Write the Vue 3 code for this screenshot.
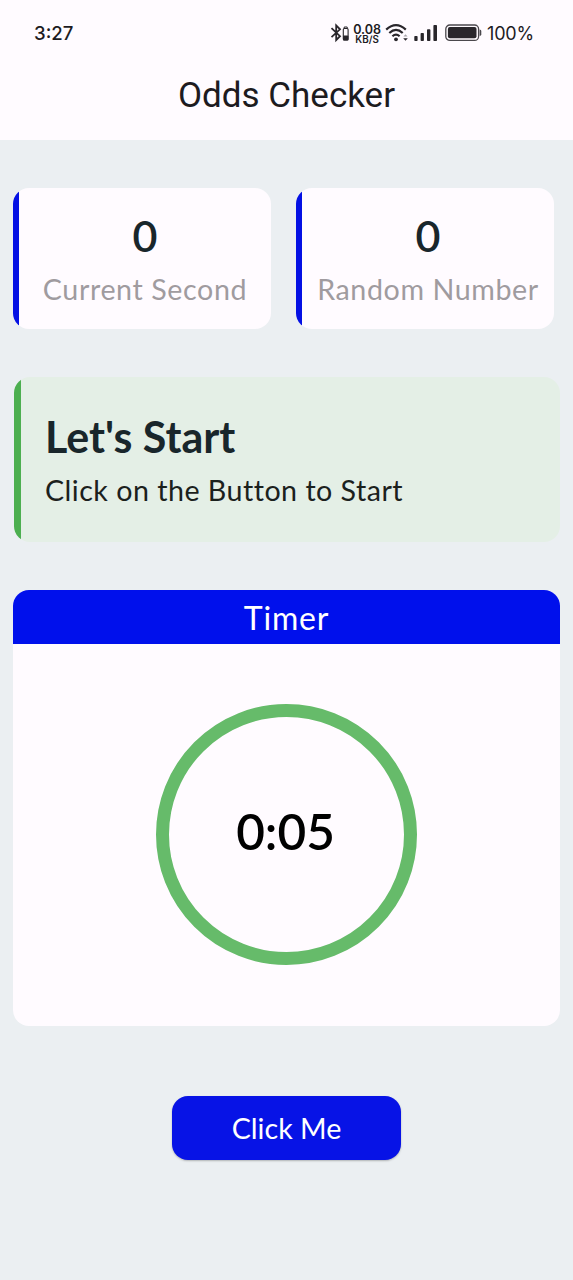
<script setup>
import { ref } from 'vue'

const stats = [
  { label: 'Current Second', value: 0 },
  { label: 'Random Number', value: 0 },
]
const time = ref('0:05')
</script>

<template>
  <div class="screen">
    <header class="top">
      <div class="status">
        <span class="clock">3:27</span>
        <div class="indicators">
          <svg class="bluetooth" width="20" height="20" viewBox="0 0 20 20">
            <path d="M1.5 5.2 10 13.2 6.2 17V2.4L10 6.3 1.5 14.2" fill="none" stroke="#29262b" stroke-width="1.8" />
            <path d="M14.2 5.6V4h3v1.6" fill="none" stroke="#29262b" stroke-width="1" />
            <rect x="13.3" y="5.5" width="4.8" height="11.5" rx="1" fill="none" stroke="#29262b" stroke-width="1.1" />
            <rect x="13" y="12.5" width="5.4" height="5" rx="1" fill="#29262b" />
          </svg>
          <div class="rate"><span class="amount">0.08</span><span class="unit">KB/S</span></div>
          <svg class="wifi" width="24" height="20" viewBox="0 0 24 20">
            <g fill="none" stroke="#29262b" stroke-width="2.2">
              <path d="M1.2 6.6Q11 -2.4 20.8 6.6" />
              <path d="M4.3 10Q11 3.8 17.7 10" />
              <path d="M7.4 13.3Q11 10 14.6 13.3" />
            </g>
            <circle cx="11" cy="16.3" r="1.9" fill="#29262b" />
            <path d="M20.5 11.2 22.6 13.6H18.4Z" fill="#aaa6ac" />
            <path d="M18.2 15.2H22.8L20.5 17.8Z" fill="#29262b" />
          </svg>
          <svg class="signal" width="24" height="18" viewBox="0 0 24 18">
            <g fill="#29262b">
              <rect x="0.3" y="12" width="3.3" height="5" rx=".8" />
              <rect x="6.6" y="9" width="3.3" height="8" rx=".8" />
              <rect x="13" y="5.3" width="3.4" height="11.7" rx=".8" />
              <rect x="19.4" y="1" width="3.6" height="16" rx=".8" />
            </g>
          </svg>
          <svg class="battery" width="38" height="18" viewBox="0 0 38 18">
            <rect x=".8" y="1" width="32.8" height="15.4" rx="4" fill="none" stroke="#4b484d" stroke-width="1.3" />
            <rect x="2.9" y="3.1" width="28.6" height="11.2" rx="2" fill="#29262b" />
            <path d="M34.6 5.6q1.7.2 1.7 1.5v3.4q0 1.3-1.7 1.5Z" fill="#4b484d" />
          </svg>
          <span class="percent">100%</span>
        </div>
      </div>
      <h1>Odds Checker</h1>
    </header>

    <main>
      <section class="stats">
        <article v-for="stat in stats" :key="stat.label" class="stat">
          <strong>{{ stat.value }}</strong>
          <span>{{ stat.label }}</span>
        </article>
      </section>

      <section class="notice">
        <h2>Let's Start</h2>
        <p>Click on the Button to Start</p>
      </section>

      <section class="timer">
        <h3>Timer</h3>
        <div class="dial-area">
          <div class="dial">{{ time }}</div>
        </div>
      </section>

      <button type="button">Click Me</button>
    </main>
  </div>
</template>

<style>
html, body { margin: 0; background: #ebeff2; }
</style>

<style scoped>
.screen {
  box-sizing: border-box;
  width: 573px;
  height: 1280px;
  overflow: hidden;
  background: #ebeff2;
  font-family: Lato, "Liberation Sans", sans-serif;
}
.top { box-sizing: border-box; height: 140px; padding-top: 18px; background: #fffbff; }
.status {
  display: flex;
  justify-content: space-between;
  align-items: center;
  height: 30px;
  padding: 0 39px 0 34px;
  font-family: Inter, sans-serif;
  color: #1d1b1f;
}
.clock { font-size: 18.6px; font-weight: 500; }
.indicators { display: flex; align-items: center; }
.rate {
  display: flex;
  flex-direction: column;
  align-items: center;
  width: 28px;
  margin: 2px 4px 0 3px;
  font-weight: 600;
}
.amount { font-size: 12.5px; line-height: 11px; }
.unit { font-size: 9.8px; line-height: 10px; }
.signal { margin-left: 5px; }
.battery { margin-left: 7px; }
.percent { margin-left: 4px; font-size: 18px; letter-spacing: -0.2px; }
h1 {
  margin: 26.5px 0 0;
  font: 400 35px/42px Roboto, sans-serif;
  text-align: center;
  color: #1d1b1f;
}
main { padding: 48px 13px 0; }
.stats { display: grid; grid-template-columns: 258px 258px; gap: 25px; }
.stat, .notice { overflow: hidden; border-radius: 16px; }
.stat {
  box-sizing: border-box;
  height: 140.5px;
  display: flex;
  flex-direction: column;
  align-items: center;
  padding: 21px 0 0 6px;
  background: linear-gradient(90deg, #0410e4 6.3px, #fffbff 6.3px);
}
.stat strong { font-size: 43px; line-height: 54px; font-weight: 600; color: #19262b; }
.stat span { margin-top: 8px; font-size: 28.65px; line-height: 36px; letter-spacing: 0.6px; white-space: nowrap; color: #a09b9f; }
.notice {
  box-sizing: border-box;
  height: 165px;
  margin: 48px 0 0 1px;
  padding: 33px 0 0 31px;
  background: linear-gradient(90deg, #4caf50 7px, #e4efe6 7px);
}
h2 { margin: 0; font-size: 43px; line-height: 54px; font-weight: 700; color: #19262b; }
p { margin: 8px 0 0; font-size: 28.65px; line-height: 36px; letter-spacing: 0.48px; color: #1b211d; }
.timer { height: 436px; margin-top: 48.5px; overflow: hidden; border-radius: 16px; background: #fffbff; }
h3 {
  margin: 0;
  height: 54px;
  font-size: 32px;
  line-height: 56px;
  font-weight: 400;
  letter-spacing: 0.8px;
  text-align: center;
  color: #fff;
  background: #0010ec;
}
.dial-area { display: flex; justify-content: center; padding-top: 60px; }
.dial {
  box-sizing: border-box;
  width: 261px;
  height: 261px;
  border: 13.4px solid #66bb6a;
  border-radius: 50%;
  padding-right: 2px;
  font-size: 49.5px;
  line-height: 228px;
  font-weight: 600;
  text-align: center;
  color: #000;
}
button {
  display: block;
  width: 229px;
  height: 64px;
  margin: 70px auto 0;
  padding: 0 0 1px;
  border: 0;
  border-radius: 16px;
  font: 400 28.65px/36px Lato, sans-serif;
  color: #fff;
  background: #0713e6;
  box-shadow: 0 1px 2px rgba(0, 0, 0, .25);
}
</style>
